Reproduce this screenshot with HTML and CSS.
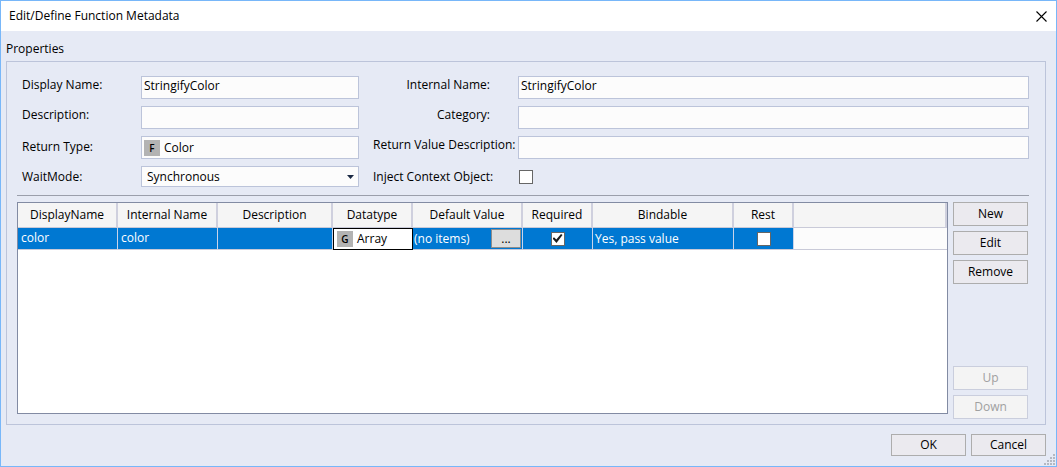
FILE: index.html
```html
<!DOCTYPE html>
<html lang="en">
<head>
<meta charset="utf-8">
<title>Edit/Define Function Metadata</title>
<link rel="stylesheet" href="styles.css">
</head>
<body>
<main class="dialog">
  <header class="titlebar">
    <h1 class="title">Edit/Define Function Metadata</h1>
    <button class="close" type="button" aria-label="Close">
      <svg width="11" height="11" viewBox="0 0 11 11" fill="none" stroke="#000" stroke-width="1.1"><path d="M.5.5l10 10M10.5.5l-10 10"/></svg>
    </button>
  </header>
  <form class="content">
    <h2 class="group-title">Properties</h2>
    <section class="group">
      <div class="fields">
        <label for="display">Display Name:</label>
        <input class="box" id="display" type="text" value="StringifyColor">
        <label class="end" for="internal">Internal Name:</label>
        <input class="box" id="internal" type="text" value="StringifyColor">

        <label for="desc">Description:</label>
        <input class="box" id="desc" type="text">
        <label class="end" for="category">Category:</label>
        <input class="box" id="category" type="text">

        <label class="low" for="rtype">Return Type:</label>
        <div class="box typed"><span class="badge">F</span><input class="plain" id="rtype" type="text" value="Color"></div>
        <label for="rdesc">Return Value Description:</label>
        <input class="box" id="rdesc" type="text">

        <label class="low" for="wait">WaitMode:</label>
        <div class="picker">
          <select class="box select" id="wait"><option>Synchronous</option></select>
          <svg class="arrow" width="7" height="4" viewBox="0 0 7 4"><path d="M0 0h7L3.5 4z" fill="#1b2a44"/></svg>
        </div>
        <label class="low" for="inject">Inject Context Object:</label>
        <input class="check lone" id="inject" type="checkbox">
      </div>
      <div class="params">
        <div class="grid-frame">
          <table class="grid">
            <colgroup><col class="w100"><col class="w100"><col class="w115"><col class="w80"><col class="w110"><col class="w70"><col class="w141"><col class="w60"><col></colgroup>
            <thead>
              <tr><th>DisplayName</th><th>Internal Name</th><th>Description</th><th>Datatype</th><th>Default Value</th><th>Required</th><th>Bindable</th><th>Rest</th><th></th></tr>
            </thead>
            <tbody>
              <tr>
                <td>color</td><td>color</td><td></td>
                <td class="active"><div class="typed"><span class="badge">G</span><span>Array</span></div></td>
                <td><div class="value"><span>(no items)</span><button class="more" type="button">...</button></div></td>
                <td class="mid"><input class="check" type="checkbox" aria-label="Required" checked></td>
                <td>Yes, pass value</td>
                <td class="mid"><input class="check" type="checkbox" aria-label="Rest"></td>
                <td class="blank"></td>
              </tr>
            </tbody>
          </table>
        </div>
        <div class="actions">
          <button class="btn" type="button">New</button>
          <button class="btn" type="button">Edit</button>
          <button class="btn" type="button">Remove</button>
          <button class="btn push" type="button" disabled>Up</button>
          <button class="btn" type="button" disabled>Down</button>
        </div>
      </div>
    </section>
    <footer class="footer">
      <button class="btn short" type="button">OK</button>
      <button class="btn short" type="button">Cancel</button>
    </footer>
  </form>
  <svg class="grip" width="11" height="11" viewBox="0 0 11 11" fill="#b4b8c2"><path d="M9 0h2v2h-2zM6 3h2v2h-2zM9 3h2v2h-2zM3 6h2v2h-2zM6 6h2v2h-2zM9 6h2v2h-2zM0 9h2v2h-2zM3 9h2v2h-2zM6 9h2v2h-2zM9 9h2v2h-2z"/></svg>
</main>
</body>
</html>
```
FILE: styles.css
```css
* { box-sizing: border-box; }
body { margin: 0; font: 12px/18px "Open Sans", "Noto Sans", sans-serif; color: #000; }
input, select, button { font: inherit; color: inherit; margin: 0; border-radius: 0; }
.dialog { position: relative; display: flex; flex-direction: column; min-height: 100vh; border: 1px solid #78b7f9; background: #e6eaf5; }
.titlebar { display: flex; align-items: center; justify-content: space-between; height: 30px; padding: 0 9px 0 8px; background: #fff; }
.title, .group-title { margin: 0; font-size: 12px; font-weight: 400; }
.close { display: flex; padding: 0; border: 0; background: none; }
.content { flex: 1; display: flex; flex-direction: column; padding: 9px 10px 10px 5px; }
.group-title { height: 21px; }
.group { flex: 1; display: flex; flex-direction: column; padding: 14px 16px 5px 10px; border: 1px solid #bcc4da; }
.fields { display: grid; grid-template-columns: 119px minmax(120px, 218px) 159px minmax(120px, 1fr); gap: 7px 0; padding: 0 0 8px 5px; border-bottom: 1px solid #9b9fab; }
.fields > label { white-space: nowrap; }
.fields > label:nth-of-type(even) { padding-left: 14px; }
.fields > .end { padding-right: 28px; text-align: right; }
.fields > .low { padding-top: 2px; }
.box { width: 100%; min-width: 0; height: 23px; padding: 0 2px 5px; border: 1px solid #bcc4da; background: #fcfcfc; }
.typed { display: flex; align-items: center; gap: 4px; }
.box.typed { padding: 0 2px; }
.badge { width: 16px; height: 16px; background: #b3b3b3; font-size: 10px; font-weight: 600; line-height: 17px; text-align: center; }
.plain { flex: 1; min-width: 0; padding: 0; border: 0; background: none; }
.picker { position: relative; }
.select { display: block; height: 21px; padding: 0 5px; appearance: none; }
.arrow { position: absolute; right: 5px; top: 9px; pointer-events: none; }
.check { display: grid; place-items: center; width: 14px; height: 14px; appearance: none; border: 1px solid #666; background: #fff; }
.check:checked::before { content: ""; width: 10px; height: 9px; background: #1c1c1c; clip-path: polygon(0 50%, 15% 35%, 38% 62%, 85% 0, 100% 12%, 40% 100%); }
.lone { margin: 4px 0 0 1px; }
.params { flex: 1; display: flex; gap: 5px; padding: 6px 1px 0 0; }
.grid-frame { flex: 1; min-width: 0; margin-bottom: 5px; border: 1px solid #828ba3; background: #fff; }
.grid { width: 100%; table-layout: fixed; border-collapse: separate; border-spacing: 0; }
.w60 { width: 60px; } .w70 { width: 70px; } .w80 { width: 80px; } .w100 { width: 100px; } .w110 { width: 110px; } .w115 { width: 115px; } .w141 { width: 141px; }
.grid th { height: 25px; padding: 0; border-right: 2px solid #cfd0de; border-bottom: 1px solid #c9cad8; background: #f5f5f5; font-weight: 400; }
.grid td { height: 22px; padding: 0 0 2px 3px; border-right: 1px solid #c9d3ea; border-bottom: 1px solid #c9cad8; background: #0078d2; color: #fff; line-height: 18px; }
.grid .active { padding: 0 3px; border: 1px solid #000; background: #fff; color: #000; }
.value { display: flex; justify-content: space-between; align-items: center; }
.grid td:nth-child(5) { padding: 0 1px; }
.grid td:nth-child(7) { padding: 0 2px; }
.more { width: 30px; height: 19px; padding: 0; border: 1px solid #8c8c8c; background: #ddd; color: #000; line-height: 16px; }
.grid .mid { padding: 0; }
.mid .check { margin: 0 auto; }
.grid .blank { border-right: 0; background: #fcfcfc; }
.actions { display: flex; flex-direction: column; gap: 5px; width: 75px; }
.btn { width: 75px; height: 24px; padding: 0 0 1px; border: 1px solid #adadad; background: #ebeaef; }
.btn:disabled { border-color: #cacedd; background: #f4f4f4; color: #a0a0a0; }
.push { margin-top: auto; }
.footer { display: flex; justify-content: flex-end; gap: 5px; padding-top: 9px; }
.short { height: 22px; }
.grip { position: absolute; right: 1px; bottom: 1px; }
```
